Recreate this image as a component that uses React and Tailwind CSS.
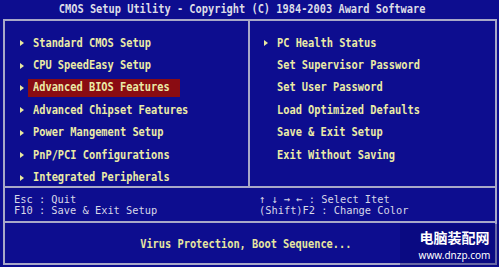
import React from "react";

const left = [
  "Standard CMOS Setup",
  "CPU SpeedEasy Setup",
  "Advanced BIOS Features",
  "Advanced Chipset Features",
  "Power Mangement Setup",
  "PnP/PCI Configurations",
  "Integrated Peripherals",
];

const right = [
  { label: "PC Health Status", arrow: true },
  { label: "Set Supervisor Password" },
  { label: "Set User Password" },
  { label: "Load Optimized Defaults" },
  { label: "Save & Exit Setup" },
  { label: "Exit Without Saving" },
];

function Tri() {
  return (
    <svg width="4" height="6" viewBox="0 0 4 6" className="block">
      <polygon points="0,0 4,3 0,6" fill="#e8e8a0" />
    </svg>
  );
}

function Txt({ children, className = "" }) {
  return (
    <span
      className={
        "inline-block whitespace-nowrap origin-left scale-x-[0.86] " + className
      }
    >
      {children}
    </span>
  );
}

function HelpTxt({ children }) {
  return (
    <span className="inline-block whitespace-nowrap origin-left scale-x-[0.94] text-[11px] leading-[11px]">
      {children}
    </span>
  );
}

function Row({ label, arrow, selected }) {
  return (
    <div className="flex items-center h-[22.4px]">
      <div className="w-[13px] flex items-center">{arrow ? <Tri /> : null}</div>
      <div
        className={
          "-ml-[5px] pl-[5px] h-[18px] w-[152px] flex items-center " +
          (selected ? "bg-[#8a0c12]" : "")
        }
      >
        <Txt className="font-bold text-[#ebeba6]">{label}</Txt>
      </div>
    </div>
  );
}

export default function App() {
  return (
    <div
      className="relative w-[499px] h-[267px] overflow-hidden bg-[#0d0d8f] text-[12px] leading-[11px]"
      style={{ fontFamily: '"DejaVu Sans Mono", "Liberation Mono", monospace' }}
    >
      <div className="h-[19px] flex items-center justify-center pr-[14px] pb-[1px]">
        <span className="inline-block whitespace-nowrap origin-center scale-x-[0.86] font-bold text-[#dcdce6]">
          CMOS Setup Utility - Copyright (C) 1984-2003 Award Software
        </span>
      </div>
      <div className="ml-[3px] w-[494px] h-[246px] border-2 border-[#a8a8c8] flex flex-col">
        <div className="h-[167px] flex border-b-2 border-[#a8a8c8]">
          <div className="w-[245px] border-r-2 border-[#a8a8c8] pt-[11px] pl-[15px]">
            {left.map((l) => (
              <Row key={l} label={l} arrow selected={l === "Advanced BIOS Features"} />
            ))}
          </div>
          <div className="flex-1 pt-[11px] pl-[14px]">
            {right.map((r) => (
              <Row key={r.label} label={r.label} arrow={r.arrow} />
            ))}
          </div>
        </div>
        <div className="h-[35px] flex border-b-2 border-[#a8a8c8] pt-[6px] text-[#d8d8e8]">
          <div className="w-[245px] pl-[9px] flex flex-col">
            <div className="h-[11px]"><HelpTxt>Esc : Quit</HelpTxt></div>
            <div className="h-[11px]"><HelpTxt>F10 : Save &amp; Exit Setup</HelpTxt></div>
          </div>
          <div className="flex-1 pl-[9px] flex flex-col">
            <div className="h-[11px]"><HelpTxt>↑ ↓ → ←   : Select Itet</HelpTxt></div>
            <div className="h-[11px]"><HelpTxt>(Shift)F2 : Change Color</HelpTxt></div>
          </div>
        </div>
        <div className="flex-1 flex items-center justify-center pr-[9px] pt-[2px]">
          <span className="inline-block whitespace-nowrap origin-center scale-x-[0.86] font-bold text-[#e6e6a0]">
            Virus Protection, Boot Sequence...
          </span>
        </div>
      </div>
      <div className="absolute left-[400px] top-[224px] w-[99px] h-[42px] bg-[#08086e]/40 flex flex-col items-center justify-center pl-[10px]">
        <div
          className="text-[14px] leading-[16px] font-bold text-white"
          style={{ fontFamily: '"Noto Sans CJK SC", sans-serif' }}
        >
          电脑装配网
        </div>
        <div
          className="text-[10px] leading-[12px] text-white mt-[4px]"
          style={{ fontFamily: '"Noto Sans", sans-serif' }}
        >
          www.dnzp.com
        </div>
      </div>
    </div>
  );
}
